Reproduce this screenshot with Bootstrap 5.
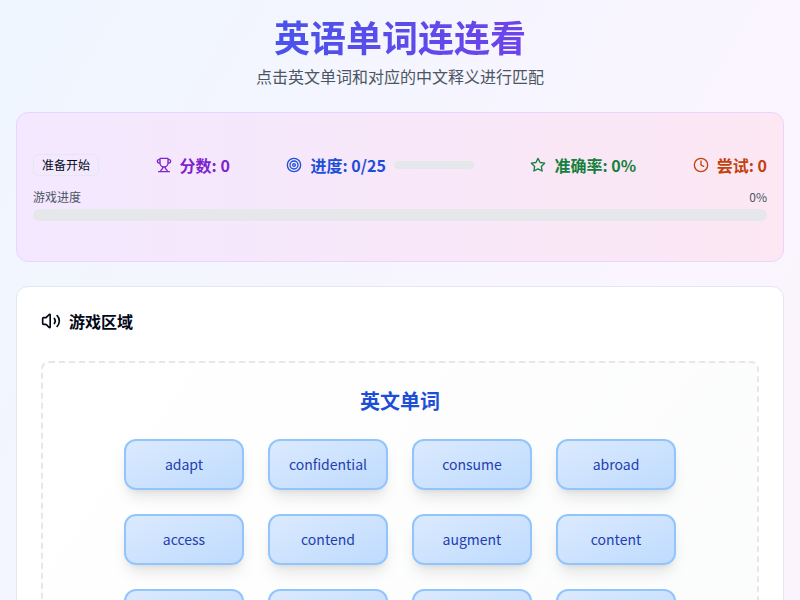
<!DOCTYPE html>
<html lang="zh-CN">
<head>
<meta charset="utf-8">
<meta name="viewport" content="width=device-width, initial-scale=1">
<title>英语单词连连看</title>
<link href="https://cdn.jsdelivr.net/npm/bootstrap@5.3.0/dist/css/bootstrap.min.css" rel="stylesheet">
<style>
body {
  font-family: "Noto Sans CJK SC", sans-serif;
  color: #020817;
  background: linear-gradient(to bottom right, #eff6ff, #faf5ff, #fdf2f8);
}
.game-page { min-height: 230vh; }
.page-title {
  font-size: 36px;
  line-height: 40px;
  background: linear-gradient(to right, #2563eb, #9333ea);
  -webkit-background-clip: text;
  background-clip: text;
  color: transparent;
}
.subtitle { line-height: 24px; color: #4b5563; }
.stats-panel {
  border: 1px solid #e9d5ff;
  border-radius: 12px;
  background: linear-gradient(to right, #f3e8ff, #fce7f3);
  padding: 40px 16px;
}
.stats-row { margin-bottom: 12px; }
.status-tag {
  border: 1px solid #e2e8f0;
  border-radius: 6px;
  padding: 2px 8px;
  font-size: 12px;
  line-height: 16px;
}
.stat { font-weight: 700; line-height: 24px; }
.stat-score { color: #7e22ce; }
.stat-progress { color: #1d4ed8; }
.stat-accuracy { color: #15803d; }
.stat-tries { color: #c2410c; }
.progress { --bs-progress-bg: #e5e7eb; --bs-progress-border-radius: 8px; }
.progress-mini { width: 80px; height: 8px; }
.progress-full { height: 12px; }
.progress-label { font-size: 12px; line-height: 16px; color: #4b5563; }
.game-panel {
  border: 1px solid #e2e8f0;
  border-radius: 12px;
  background: #fff;
}
.section-title { font-size: 16px; line-height: 20px; margin-bottom: 30px; }
.board {
  border: 2px dashed #e5e7eb;
  border-radius: 8px;
  background: linear-gradient(to bottom right, #fff, #f9fafb);
}
.board-title { font-size: 20px; line-height: 28px; color: #1d4ed8; }
.word-grid { display: grid; grid-template-columns: repeat(4, 120px); }
.word-card {
  border: 2px solid #93c5fd;
  border-radius: 12px;
  background: linear-gradient(to bottom right, #dbeafe, #bfdbfe);
  color: #1e40af;
  height: 51px;
  font-size: 14px;
  box-shadow: 0 10px 15px -3px rgba(0,0,0,.1), 0 4px 6px -4px rgba(0,0,0,.1);
}
.line-icon { fill: none; stroke: currentColor; stroke-width: 2; stroke-linecap: round; stroke-linejoin: round; flex: none; }
</style>
<script src="https://cdn.jsdelivr.net/npm/bootstrap@5.3.0/dist/js/bootstrap.bundle.min.js"></script>
</head>
<body>
<main class="game-page container-fluid p-3 d-flex flex-column">
  <header class="text-center mb-4">
    <h1 class="page-title fw-bold mb-2">英语单词连连看</h1>
    <p class="subtitle mb-0">点击英文单词和对应的中文释义进行匹配</p>
  </header>

  <section class="stats-panel mb-4">
    <div class="stats-row d-flex align-items-center justify-content-between">
      <span class="status-tag">准备开始</span>
      <div class="stat stat-score d-flex align-items-center gap-2">
        <svg class="line-icon" width="16" height="16" viewBox="0 0 24 24" aria-hidden="true"><path d="M6 9H4.500a2.500 2.500 0 0 1 0-5H6M18 9h1.500a2.500 2.500 0 0 0 0-5H18M4 22h16M10 14.660V17c0 .55-.47.98-.97 1.210C7.850 18.750 7 20.240 7 22M14 14.660V17c0 .55.47.98.97 1.210C16.150 18.750 17 20.240 17 22M18 2H6v7a6 6 0 0 0 12 0V2Z"/></svg>
        <span>分数: 0</span>
      </div>
      <div class="stat stat-progress d-flex align-items-center gap-2">
        <svg class="line-icon" width="16" height="16" viewBox="0 0 24 24" aria-hidden="true"><circle cx="12" cy="12" r="10"/><circle cx="12" cy="12" r="6"/><circle cx="12" cy="12" r="2"/></svg>
        <span>进度: 0/25</span>
        <div class="progress progress-mini" role="progressbar" aria-label="进度" aria-valuenow="0" aria-valuemin="0" aria-valuemax="25"><div class="progress-bar w-0"></div></div>
      </div>
      <div class="stat stat-accuracy d-flex align-items-center gap-2">
        <svg class="line-icon" width="16" height="16" viewBox="0 0 24 24" aria-hidden="true"><path d="M12 2l3.090 6.260L22 9.270l-5 4.870 1.180 6.880L12 17.770l-6.180 3.250L7 14.140 2 9.270l6.910-1.010L12 2z"/></svg>
        <span>准确率: 0%</span>
      </div>
      <div class="stat stat-tries d-flex align-items-center gap-2">
        <svg class="line-icon" width="16" height="16" viewBox="0 0 24 24" aria-hidden="true"><circle cx="12" cy="12" r="10"/><path d="M12 6v6l4 2"/></svg>
        <span>尝试: 0</span>
      </div>
    </div>
    <div class="progress-label d-flex justify-content-between mb-1">
      <span>游戏进度</span><span>0%</span>
    </div>
    <div class="progress progress-full" role="progressbar" aria-label="游戏进度" aria-valuenow="0" aria-valuemin="0" aria-valuemax="100"><div class="progress-bar w-0"></div></div>
  </section>

  <section class="game-panel p-4 flex-grow-1 d-flex flex-column">
    <h2 class="section-title fw-bold d-flex align-items-center gap-2">
      <svg class="line-icon" width="20" height="20" viewBox="0 0 24 24" aria-hidden="true"><path d="M11 4.702a.705.705 0 0 0-1.203-.498L6.413 7.587A1.400 1.400 0 0 1 5.416 8H3a1 1 0 0 0-1 1v6a1 1 0 0 0 1 1h2.416a1.400 1.400 0 0 1 .997.413l3.383 3.384A.705.705 0 0 0 11 19.298zM16 9a5 5 0 0 1 0 6M19.364 18.364a9 9 0 0 0 0-12.728"/></svg>
      <span>游戏区域</span>
    </h2>
    <div class="board p-4 flex-grow-1">
      <h3 class="board-title fw-bold text-center mb-4">英文单词</h3>
      <div class="word-grid gap-4 justify-content-center">
        <button type="button" class="word-card">adapt</button>
        <button type="button" class="word-card">confidential</button>
        <button type="button" class="word-card">consume</button>
        <button type="button" class="word-card">abroad</button>
        <button type="button" class="word-card">access</button>
        <button type="button" class="word-card">contend</button>
        <button type="button" class="word-card">augment</button>
        <button type="button" class="word-card">content</button>
        <button type="button" class="word-card">adopt</button>
        <button type="button" class="word-card">abandon</button>
        <button type="button" class="word-card">contest</button>
        <button type="button" class="word-card">assume</button>
      </div>
    </div>
  </section>
</main>
</body>
</html>
